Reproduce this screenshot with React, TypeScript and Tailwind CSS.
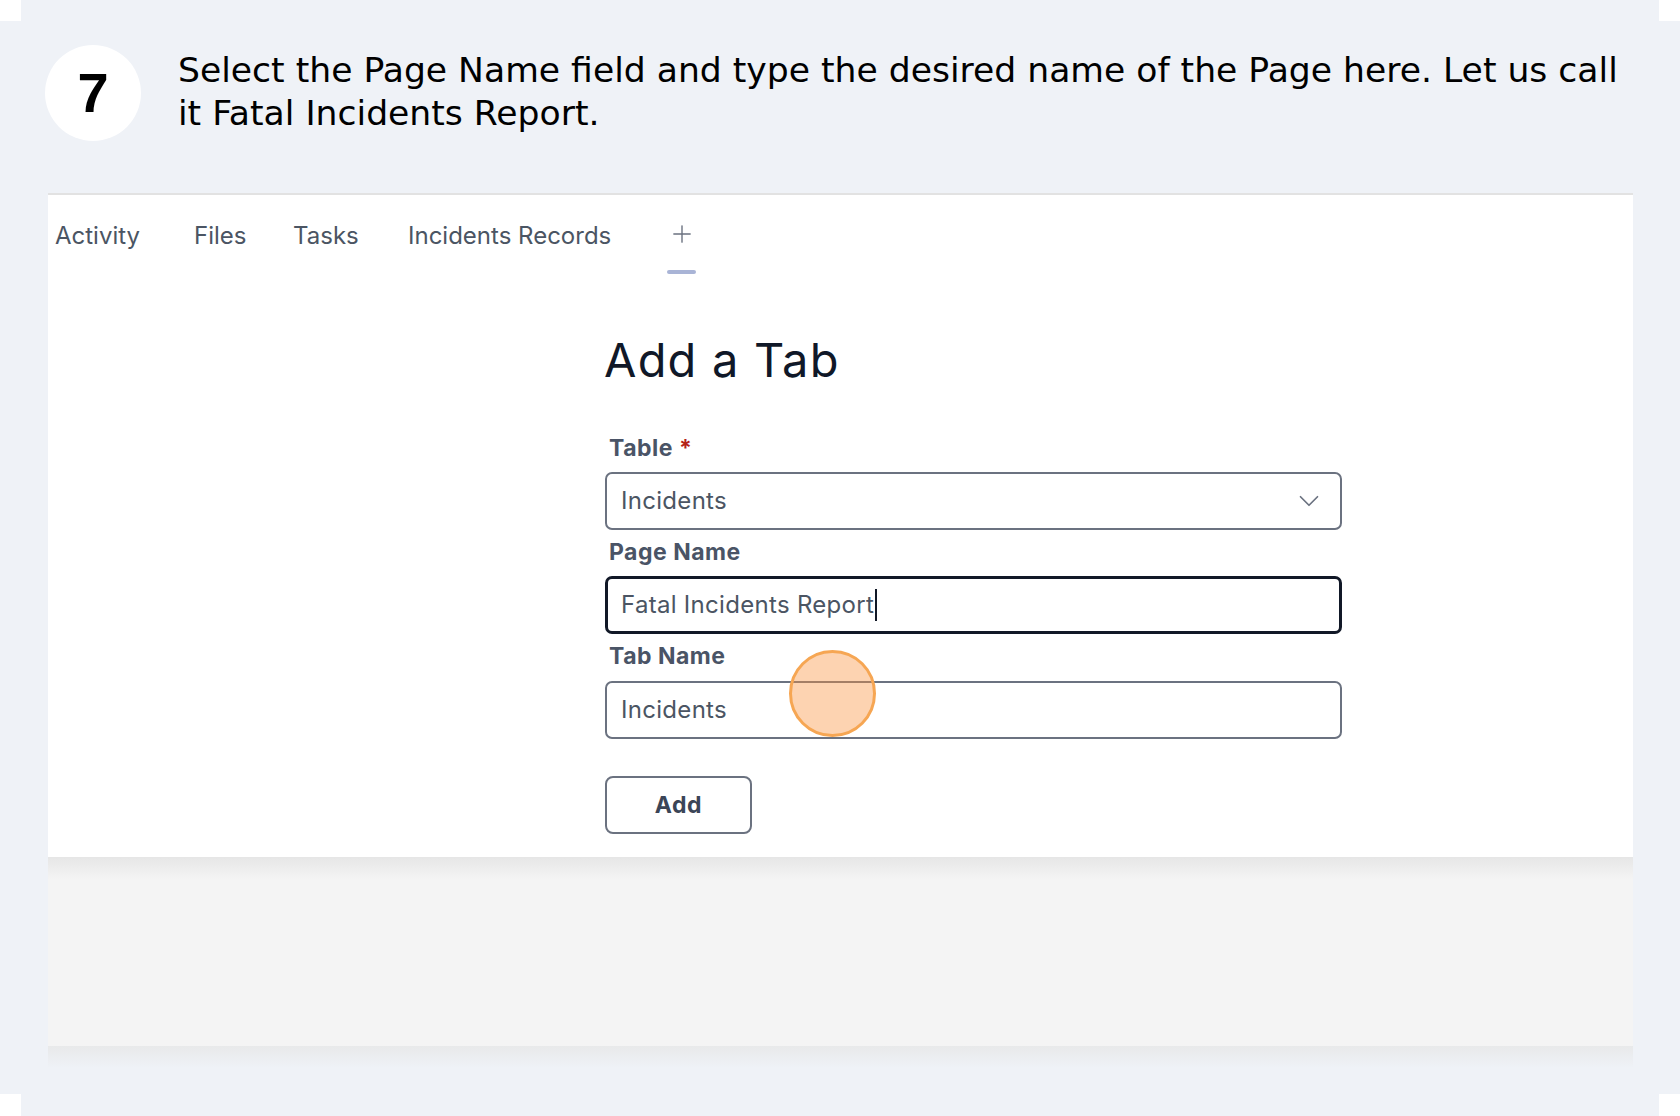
import { Plus, ChevronDown } from 'lucide-react';

const tabs = [
  { label: 'Activity', w: 'w-[139px]' },
  { label: 'Files', w: 'w-[99px]' },
  { label: 'Tasks', w: 'w-[115px]' },
  { label: 'Incidents Records', w: 'w-[259px]' },
];

function Label({ text, required }: { text: string; required?: boolean }) {
  return (
    <div className="pl-[4px] text-[23px] leading-[30px] font-bold tracking-[0.5px] text-[#4a5466]">
      {text}
      {required && <span className="ml-[6px] text-[#b42318]">*</span>}
    </div>
  );
}

export default function App() {
  return (
    <div
      className="w-[1680px] h-[1116px] bg-[#eff2f7] overflow-hidden [clip-path:polygon(21px_0,calc(100%-21px)_0,calc(100%-21px)_21px,100%_21px,100%_calc(100%-22px),calc(100%-21px)_calc(100%-22px),calc(100%-21px)_100%,21px_100%,21px_calc(100%-22px),0_calc(100%-22px),0_21px,21px_21px)]"
    >
      {/* step header */}
      <div className="h-[193px] flex items-start pt-[45px] pl-[45px]">
        <div className="w-[96px] h-[96px] rounded-full bg-white flex items-center justify-center shrink-0">
          <span className="font-['Liberation_Sans',Arial,sans-serif] font-black text-[56px] leading-none text-black">7</span>
        </div>
        <p className="ml-[37px] mt-[4px] w-[1462px] font-['DejaVu_Sans',Verdana,sans-serif] text-[34.6px] leading-[43px] text-black">
          Select the Page Name field and type the desired name of the Page here. Let us call it Fatal Incidents Report.
        </p>
      </div>

      {/* screenshot panel */}
      <div className="ml-[48px] w-[1585px] font-['Inter',sans-serif]">
        <div className="h-[664px] bg-white border-t-2 border-[#e2e2e2]">
          <div className="flex items-start pt-[25px] pl-[7px]">
            {tabs.map(t => (
              <div key={t.label} className={`${t.w} text-[24px] leading-[32px] text-[#4b5563]`}>
                {t.label}
              </div>
            ))}
            <div className="flex flex-col items-center">
              <Plus className="w-[28px] h-[28px] text-[#6b7280]" strokeWidth={1.2} />
              <div className="mt-[22px] w-[29px] h-[4px] bg-[#a9b4d6] rounded-full" />
            </div>
          </div>

          <div className="ml-[557px] w-[737px] mt-[58px]">
            <h1 className="text-[47px] leading-[56px] font-normal tracking-[1.2px] text-[#101828] -ml-[1px]">Add a Tab</h1>

            <div className="mt-[45px]">
              <Label text="Table" required />
              <div className="mt-[9px] h-[58px] border-2 border-[#6b7280] rounded-[7px] px-[14px] flex items-center justify-between text-[24px] tracking-[0.3px] text-[#4b5563]">
                <span>Incidents</span>
                <ChevronDown className="w-[34px] h-[34px] text-[#6b7280]" strokeWidth={1.2} />
              </div>
            </div>

            <div className="mt-[7px]">
              <Label text="Page Name" />
              <div className="mt-[9px] h-[58px] border-[3px] border-[#111827] rounded-[7px] px-[13px] flex items-center text-[24px] tracking-[0.3px] text-[#4b5563]">
                <span>Fatal Incidents Report</span>
                <span className="ml-[1px] w-[2px] h-[32px] bg-[#111827]" />
              </div>
            </div>

            <div className="mt-[7px] relative">
              <Label text="Tab Name" />
              <div className="mt-[10px] h-[58px] border-2 border-[#6b7280] rounded-[7px] px-[14px] flex items-center text-[24px] tracking-[0.3px] text-[#4b5563]">
                <span>Incidents</span>
              </div>
              <div className="absolute left-[184px] top-[9px] w-[87px] h-[87px] rounded-full bg-[rgba(251,146,60,0.4)] border-[3px] border-[#f6a653]" />
            </div>

            <button className="mt-[37px] w-[147px] h-[58px] border-2 border-[#6b7280] rounded-[8px] bg-white text-[23px] font-bold tracking-[0.6px] text-[#3b4557]">
              Add
            </button>
          </div>
        </div>
        <div className="h-[189px] bg-[linear-gradient(to_bottom,#e6e6e6,#f4f4f4_22px)]" />
        <div className="h-[22px] bg-[linear-gradient(to_bottom,#e8e9ea,#eff2f7)]" />
      </div>
    </div>
  );
}
